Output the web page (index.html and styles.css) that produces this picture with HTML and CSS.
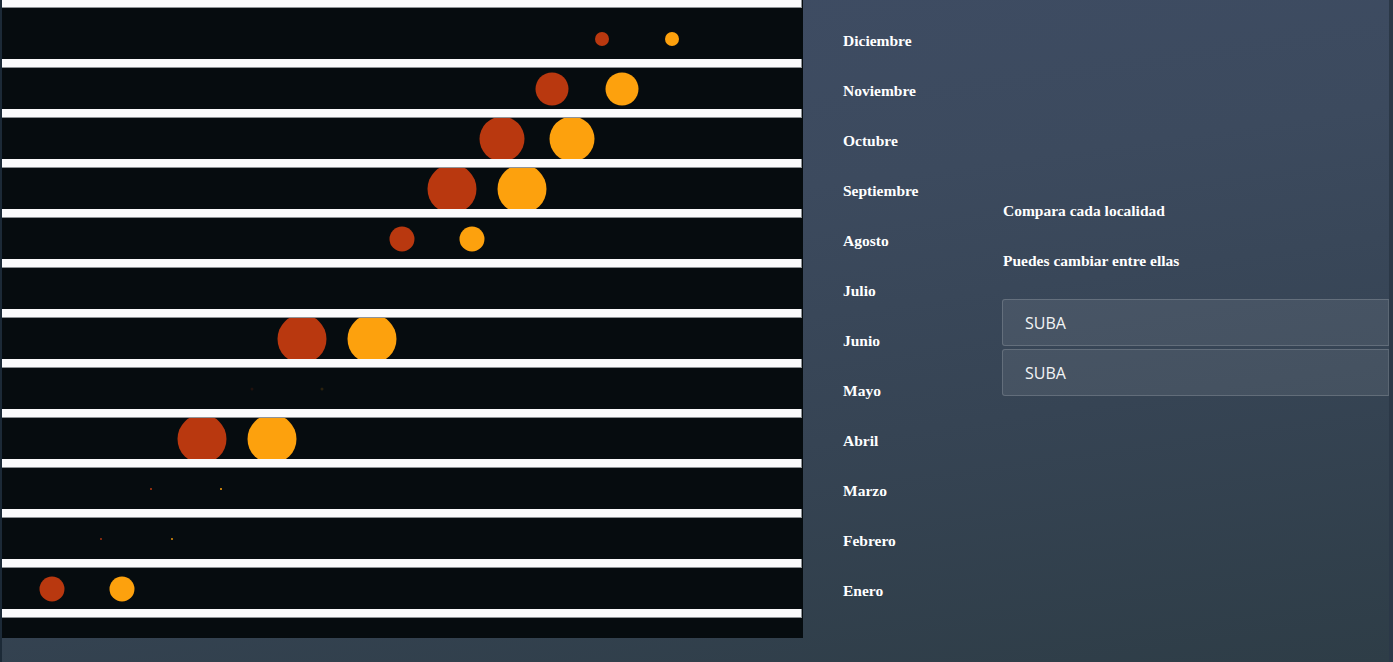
FILE: index.html
```html
<!DOCTYPE html>
<html lang="es">
<head>
<meta charset="utf-8">
<title>Comparación por localidad</title>
<link rel="stylesheet" href="styles.css">
</head>
<body>
<div class="page">
  <div class="edge-left"></div>
  <div class="chart">
    <svg class="chart-svg" width="801" height="638" viewBox="0 0 801 638">
      <rect x="0" y="0" width="801" height="638" fill="#060c0f"/>
      <g class="dots">
        <circle cx="600" cy="39" r="7" class="a"/><circle cx="670" cy="39" r="7" class="b"/>
        <circle cx="550" cy="89" r="16.5" class="a"/><circle cx="620" cy="89" r="16.5" class="b"/>
        <circle cx="500" cy="139" r="22.5" class="a"/><circle cx="570" cy="139" r="22.5" class="b"/>
        <circle cx="450" cy="189" r="24.5" class="a"/><circle cx="520" cy="189" r="24.5" class="b"/>
        <circle cx="400" cy="239" r="12.5" class="a"/><circle cx="470" cy="239" r="12.5" class="b"/>
        <circle cx="300" cy="339" r="24.5" class="a"/><circle cx="370" cy="339" r="24.5" class="b"/>
        <circle cx="250" cy="389" r="1.5" class="a faint"/><circle cx="320" cy="389" r="1.5" class="b faint"/>
        <circle cx="200" cy="439" r="24.5" class="a"/><circle cx="270" cy="439" r="24.5" class="b"/>
        <circle cx="149" cy="489" r="1" class="a"/><circle cx="219" cy="489" r="1" class="b"/>
        <circle cx="99" cy="539" r="0.9" class="a"/><circle cx="170" cy="539" r="0.9" class="b"/>
        <circle cx="50" cy="589" r="12.5" class="a"/><circle cx="120" cy="589" r="12.5" class="b"/>
      </g>
      <g class="bars">
        <rect x="0" y="0" width="800" height="8" class="edge"/><rect x="0" y="0" width="799" height="7" class="fill"/>
        <rect x="0" y="59" width="800" height="9" class="edge"/><rect x="0" y="59" width="799" height="8" class="fill"/>
        <rect x="0" y="109" width="800" height="9" class="edge"/><rect x="0" y="109" width="799" height="8" class="fill"/>
        <rect x="0" y="159" width="800" height="9" class="edge"/><rect x="0" y="159" width="799" height="8" class="fill"/>
        <rect x="0" y="209" width="800" height="9" class="edge"/><rect x="0" y="209" width="799" height="8" class="fill"/>
        <rect x="0" y="259" width="800" height="9" class="edge"/><rect x="0" y="259" width="799" height="8" class="fill"/>
        <rect x="0" y="309" width="800" height="9" class="edge"/><rect x="0" y="309" width="799" height="8" class="fill"/>
        <rect x="0" y="359" width="800" height="9" class="edge"/><rect x="0" y="359" width="799" height="8" class="fill"/>
        <rect x="0" y="409" width="800" height="9" class="edge"/><rect x="0" y="409" width="799" height="8" class="fill"/>
        <rect x="0" y="459" width="800" height="9" class="edge"/><rect x="0" y="459" width="799" height="8" class="fill"/>
        <rect x="0" y="509" width="800" height="9" class="edge"/><rect x="0" y="509" width="799" height="8" class="fill"/>
        <rect x="0" y="559" width="800" height="9" class="edge"/><rect x="0" y="559" width="799" height="8" class="fill"/>
        <rect x="0" y="609" width="800" height="9" class="edge"/><rect x="0" y="609" width="799" height="8" class="fill"/>
      </g>
    </svg>
  </div>
  <ul class="months">
    <li>Diciembre</li>
    <li>Noviembre</li>
    <li>Octubre</li>
    <li>Septiembre</li>
    <li>Agosto</li>
    <li>Julio</li>
    <li>Junio</li>
    <li>Mayo</li>
    <li>Abril</li>
    <li>Marzo</li>
    <li>Febrero</li>
    <li>Enero</li>
  </ul>
  <div class="controls">
    <p class="hint">Compara cada localidad</p>
    <p class="hint">Puedes cambiar entre ellas</p>
    <div class="pickers">
      <div class="picker">SUBA</div>
      <div class="picker">SUBA</div>
    </div>
  </div>
  <div class="edge-right"></div>
</div>
</body>
</html>
```

FILE: styles.css
```css
html, body {
  margin: 0;
  padding: 0;
  height: 100%;
}

body {
  background: linear-gradient(172deg, #3f4d65 0%, #3c4a5e 35%, #364454 65%, #2e3d47 100%);
  overflow: hidden;
}

.page {
  display: flex;
  align-items: flex-start;
  height: 662px;
}

.edge-left {
  width: 2px;
  height: 100%;
  background: #1c2a37;
  flex: none;
}

.chart {
  flex: none;
  width: 801px;
  height: 638px;
}

.chart-svg {
  display: block;
}

.dots .a { fill: #b9380f; }
.dots .b { fill: #fda10d; }
.dots .faint { opacity: 0.15; }

.bars .edge { fill: #8f9397; }
.bars .fill { fill: #fbfbfc; }

.months {
  list-style: none;
  margin: 16px 0 0 40px;
  padding: 0;
  width: 159px;
  flex: none;
}

.months li {
  height: 50px;
  line-height: 50px;
  font-family: "Liberation Serif", "Times New Roman", serif;
  font-weight: bold;
  font-size: 15.5px;
  color: #ffffff;
}

.controls {
  flex: 1;
  padding-top: 186px;
  min-width: 0;
}

.hint {
  margin: 0 0 0 1px;
  height: 50px;
  line-height: 50px;
  font-family: "Liberation Serif", "Times New Roman", serif;
  font-weight: bold;
  font-size: 15.5px;
  color: #ffffff;
}

.pickers {
  margin-top: 13px;
  display: flex;
  flex-direction: column;
  gap: 3px;
}

.picker {
  box-sizing: border-box;
  height: 47px;
  padding-left: 22px;
  display: flex;
  align-items: center;
  border: 1px solid rgba(255, 255, 255, 0.16);
  border-right-color: rgba(255, 255, 255, 0.12);
  border-radius: 3px 0 0 3px;
  background: rgba(255, 255, 255, 0.08);
  font-family: "Open Sans", "Noto Sans", sans-serif;
  font-size: 16px;
  color: #f3f4f6;
}

.edge-right {
  width: 4px;
  height: 100%;
  background: #2b3847;
  flex: none;
}
```
